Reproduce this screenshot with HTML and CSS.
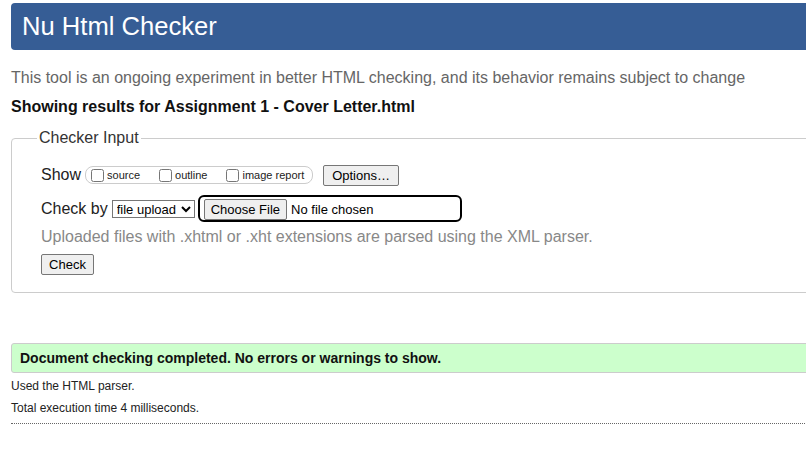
FILE: index.html
```html
<!DOCTYPE html>
<html lang="en">
<head>
<meta charset="utf-8">
<title>Nu Html Checker</title>
<link rel="stylesheet" href="styles.css">
</head>
<body>
<div class="page">
  <h1 class="banner">Nu Html Checker</h1>
  <p class="intro">This tool is an ongoing experiment in better HTML checking, and its behavior remains subject to change</p>
  <p class="showing">Showing results for Assignment 1 - Cover Letter.html</p>
  <fieldset class="checker">
    <legend>Checker Input</legend>
    <div class="row show-row">
      <span class="label">Show</span>
      <span class="pill">
        <label class="opt"><input type="checkbox">source</label>
        <label class="opt"><input type="checkbox">outline</label>
        <label class="opt last"><input type="checkbox">image report</label>
      </span>
      <button class="btn options">Options…</button>
    </div>
    <div class="row check-row">
      <span class="label">Check by</span>
      <select class="sel"><option>file upload</option></select>
      <input class="file" type="file">
    </div>
    <p class="help">Uploaded files with .xhtml or .xht extensions are parsed using the XML parser.</p>
    <button class="btn submit">Check</button>
  </fieldset>
  <p class="success">Document checking completed. No errors or warnings to show.</p>
  <p class="meta">Used the HTML parser.</p>
  <p class="meta">Total execution time 4 milliseconds.</p>
  <hr class="dots">
</div>
</body>
</html>
```
FILE: styles.css
```css
html, body {
  margin: 0;
  padding: 0;
  overflow: hidden;
  background: #fff;
}
body {
  font-family: "Liberation Sans", Arial, sans-serif;
  color: #222;
}
.page {
  width: 830px;
  padding-left: 11px;
  padding-top: 3px;
}
.banner {
  margin: 0;
  height: 47px;
  line-height: 47px;
  background: #365d95;
  color: #fff;
  font-weight: normal;
  font-size: 25.6px;
  padding-left: 11px;
  border-radius: 4px;
}
.intro {
  margin: 19px 0 0;
  font-size: 16px;
  line-height: 18px;
  color: #666;
}
.showing {
  margin: 11px 0 0;
  font-size: 16px;
  font-weight: bold;
  line-height: 18px;
  color: #111;
}
.checker {
  margin: 13px 0 0;
  border: 1px solid #ccc;
  border-radius: 4px;
  padding: 17px 0 17px 29px;
  min-width: 0;
}
.checker legend {
  font-size: 16px;
  line-height: 18px;
  color: #333;
  padding: 0 2px;
  margin-left: -4px;
}
.row {
  display: flex;
  align-items: center;
}
.label {
  font-size: 16px;
  line-height: 18px;
  color: #222;
}
.show-row {
  height: 22px;
}
.pill {
  display: inline-flex;
  align-items: center;
  height: 16px;
  border: 1px solid #ccc;
  border-radius: 8px;
  margin-left: 4px;
  padding: 0 5px 0 5px;
  width: 216px;
}
.opt {
  display: inline-flex;
  align-items: center;
  font-size: 11px;
  color: #222;
  margin-right: 19px;
}
.opt.last {
  margin-right: 0;
}
.opt input {
  margin: 0 3px 0 0;
  width: 13px;
  height: 13px;
}
.btn {
  font-family: "Liberation Sans", Arial, sans-serif;
  font-size: 13px;
  color: #000;
  background: #efefef;
  border: 1px solid #767676;
  border-radius: 2px;
  padding: 1px 6px;
  height: 21px;
}
.options {
  margin-left: 10px;
  width: 76px;
}
.check-row {
  margin-top: 9px;
  height: 27px;
}
.sel {
  font-family: "Liberation Sans", Arial, sans-serif;
  font-size: 13px;
  margin-left: 4px;
  height: 18px;
  width: 83px;
  padding: 0;
  border: 1px solid #767676;
  border-radius: 0;
  background: #fff;
  color: #000;
}
.file {
  font-family: "Liberation Sans", Arial, sans-serif;
  font-size: 13px;
  margin-left: 3px;
  box-sizing: border-box;
  width: 264px;
  height: 27px;
  border: 2px solid #000;
  border-radius: 6px;
  padding: 2px 4px;
  color: #000;
}
.file::file-selector-button {
  font-family: "Liberation Sans", Arial, sans-serif;
  font-size: 13px;
  background: #efefef;
  border: 1px solid #767676;
  border-radius: 2px;
  height: 21px;
  padding: 1px 6px;
  margin-right: 4px;
}
.help {
  margin: 6px 0 0;
  font-size: 16px;
  line-height: 18px;
  color: #888;
}
.submit {
  margin-top: 8px;
  width: 53px;
  height: 21px;
}
.success {
  margin: 50px 0 0;
  height: 28px;
  line-height: 28px;
  background: #ccffcc;
  border: 1px solid #ccc;
  border-radius: 3px;
  padding-left: 8px;
  font-size: 14px;
  font-weight: bold;
  color: #111;
}
.meta {
  margin: 6px 0 0;
  font-size: 12px;
  line-height: 15px;
  color: #222;
}
.meta + .meta {
  margin-top: 7px;
}
.dots {
  margin: 7px 0 0;
  width: 794px;
  border: 0;
  border-top: 1px dotted #666;
  height: 0;
}
```
